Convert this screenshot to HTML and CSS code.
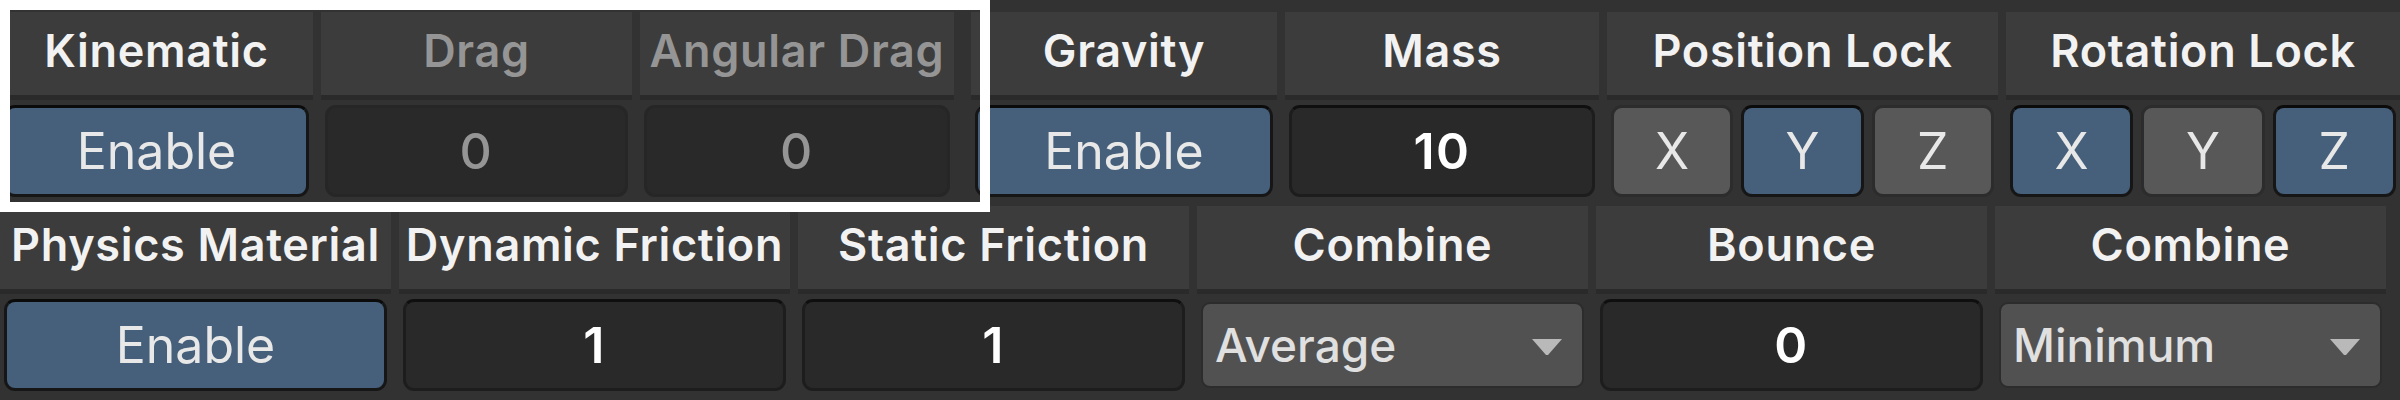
FILE: index.html
```html
<!DOCTYPE html>
<html lang="en">
<head>
    <meta charset="UTF-8">
    <title>Rigidbody Inspector</title>
    <link rel="stylesheet" href="styles.css">
</head>
<body>
    <div class="inspector">
        <!-- Body settings -->
        <div class="row row-top">
            <div class="selected">
                <div class="field">
                    <div class="field-label">Kinematic</div>
                    <div class="field-body"><div class="control toggle on">Enable</div></div>
                </div>
                <div class="field disabled">
                    <div class="field-label">Drag</div>
                    <div class="field-body"><div class="control number">0</div></div>
                </div>
                <div class="field disabled">
                    <div class="field-label">Angular Drag</div>
                    <div class="field-body"><div class="control number">0</div></div>
                </div>
            </div>
            <div class="field">
                <div class="field-label">Gravity</div>
                <div class="field-body"><div class="control toggle on">Enable</div></div>
            </div>
            <div class="field">
                <div class="field-label">Mass</div>
                <div class="field-body"><div class="control number">10</div></div>
            </div>
            <div class="field">
                <div class="field-label">Position Lock</div>
                <div class="field-body axes">
                    <div class="control toggle">X</div>
                    <div class="control toggle on">Y</div>
                    <div class="control toggle">Z</div>
                </div>
            </div>
            <div class="field">
                <div class="field-label">Rotation Lock</div>
                <div class="field-body axes">
                    <div class="control toggle on">X</div>
                    <div class="control toggle">Y</div>
                    <div class="control toggle on">Z</div>
                </div>
            </div>
        </div>

        <!-- Physics material -->
        <div class="row row-bottom">
            <div class="field">
                <div class="field-label">Physics Material</div>
                <div class="field-body"><div class="control toggle on">Enable</div></div>
            </div>
            <div class="field">
                <div class="field-label">Dynamic Friction</div>
                <div class="field-body"><div class="control number">1</div></div>
            </div>
            <div class="field">
                <div class="field-label">Static Friction</div>
                <div class="field-body"><div class="control number">1</div></div>
            </div>
            <div class="field">
                <div class="field-label">Combine</div>
                <div class="field-body">
                    <div class="control select">
                        <span>Average</span>
                        <svg class="caret" width="30" height="18" viewBox="0 0 30 18"><polygon points="0,1 30,1 16,17 14,17" fill="#b9b9b9"/></svg>
                    </div>
                </div>
            </div>
            <div class="field">
                <div class="field-label">Bounce</div>
                <div class="field-body"><div class="control number">0</div></div>
            </div>
            <div class="field">
                <div class="field-label">Combine</div>
                <div class="field-body">
                    <div class="control select">
                        <span>Minimum</span>
                        <svg class="caret" width="30" height="18" viewBox="0 0 30 18"><polygon points="0,1 30,1 16,17 14,17" fill="#b9b9b9"/></svg>
                    </div>
                </div>
            </div>
        </div>
    </div>
</body>
</html>
```

FILE: styles.css
```css
/* --- General --- */
* {
    box-sizing: border-box;
}

body {
    margin: 0;
    background-color: #323232;
    color: #f2f2f2;
    font-family: 'Inter', 'Noto Sans', sans-serif;
    overflow: hidden;
}

.inspector {
    display: flex;
    flex-direction: column;
    gap: 6px;
    padding-top: 12px;
}

/* --- Rows --- */
.row-top {
    display: grid;
    grid-template-columns: 963px 306px 314px 391px 1fr;
    column-gap: 8px;
}

.row-bottom {
    display: grid;
    grid-template-columns: repeat(6, 391px);
    column-gap: 8px;
}

/* selection frame round the first three fields */
.selected {
    position: relative;
    width: 954px;
    display: grid;
    grid-template-columns: 313px 311px 314px;
    column-gap: 8px;
}

.selected::after {
    content: '';
    position: absolute;
    left: 0;
    top: -12px;
    bottom: -12px;
    width: 970px;
    border: 10px solid #ffffff;
    pointer-events: none;
}

/* --- Fields --- */
.field-label {
    height: 88px;
    padding-bottom: 6px;
    background-color: #3c3c3c;
    border-bottom: 5px solid #2a2a2a;
    display: flex;
    align-items: center;
    justify-content: center;
    font-size: 45px;
    font-weight: 600;
    letter-spacing: 0.015em;
    white-space: nowrap;
}

.field-body {
    padding: 5px 4px 3px;
}

.axes {
    display: grid;
    grid-template-columns: repeat(3, 1fr);
    gap: 8px;
}

.control {
    height: 92px;
    border: 3px solid #1c1c1c;
    border-radius: 11px;
    display: flex;
    align-items: center;
    justify-content: center;
    font-size: 50px;
}

.toggle {
    background-color: #585858;
    border-color: #2c2c2c;
    color: #e8e8e8;
}

.toggle.on {
    background-color: #46607b;
    border-color: #161616;
    border-top-color: #0b0b0b;
}

.number {
    background-color: #292929;
    border-color: #1d1d1d;
    border-top-color: #0f0f0f;
    color: #ffffff;
    font-weight: 600;
    letter-spacing: 0.03em;
}

.select {
    height: 86px;
    margin: 3px 0;
    border: 2px solid #2c2c2c;
    border-radius: 9px;
    background-color: #515151;
    justify-content: space-between;
    padding: 0 20px 0 12px;
    font-size: 46px;
    font-weight: 500;
    color: #e0e0e0;
}

.caret {
    margin-top: 4px;
}

/* --- Disabled --- */
.disabled .field-label,
.disabled .number {
    color: #959595;
}

.disabled .number {
    font-weight: 500;
    border-color: #262626;
}
```
